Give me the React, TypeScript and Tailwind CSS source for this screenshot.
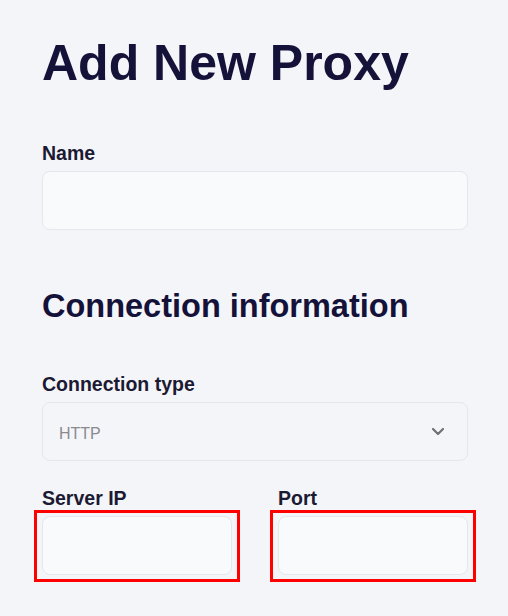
import React from 'react';

const font = { fontFamily: '"Liberation Sans", Arial, sans-serif' };

const Label: React.FC<{ children: React.ReactNode }> = ({ children }) => (
  <div className="text-[19.5px] font-bold leading-[24px] text-[#1c1a33]">{children}</div>
);

const Field: React.FC<{ highlight?: boolean }> = ({ highlight }) => (
  <div className="relative mt-1.5">
    <input
      type="text"
      className="block h-[59px] w-full rounded-[8px] border border-[#e6e7ec] bg-[#f9fafc] px-4 outline-none"
    />
    {highlight && (
      <span className="pointer-events-none absolute -top-[6px] -bottom-[7px] -left-[8px] -right-[8px] border-[3px] border-[#ff0000]" />
    )}
  </div>
);

export default function App() {
  return (
    <div className="min-h-[616px] w-full bg-[#f4f5f9] pl-[42px] pr-[40px] pt-[33px]" style={font}>
      <h1 className="text-[50px] font-bold leading-[60px] text-[#15123a]">Add New Proxy</h1>

      <div className="mt-[48px]">
        <Label>Name</Label>
        <Field />
      </div>

      <h2 className="mt-[56px] text-[32.5px] font-bold leading-[40px] text-[#15123a]">
        Connection information
      </h2>

      <div className="mt-[46px]">
        <Label>Connection type</Label>
        <div className="mt-1.5 flex h-[59px] items-center rounded-[8px] border border-[#e6e7ec] bg-[#f4f5f9] pl-4 pr-[23px]">
          <span className="pt-1 text-[16px] text-[#8a8a8f]">HTTP</span>
          <svg className="ml-auto" width="12" height="7" viewBox="0 0 12 7" fill="none">
            <path d="M1 1l5 5 5-5" stroke="#707075" strokeWidth="2.2" strokeLinecap="round" strokeLinejoin="round" />
          </svg>
        </div>
      </div>

      <div className="mt-[25px] grid grid-cols-2 gap-[46px]">
        <div>
          <Label>Server IP</Label>
          <Field highlight />
        </div>
        <div>
          <Label>Port</Label>
          <Field highlight />
        </div>
      </div>
    </div>
  );
}
